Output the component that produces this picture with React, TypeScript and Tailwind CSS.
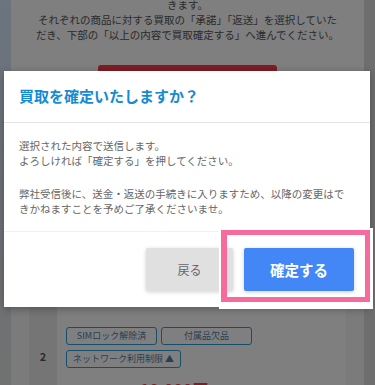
import React from "react";

const Tag = ({ label, fixed = true }: { label: string; fixed?: boolean }) => (
  <div
    className={`h-[18px] flex items-center justify-center rounded-[3px] border border-[#2a9fd6] text-[9px] text-[#4f7ea8] ${
      fixed ? "w-[91px]" : "px-[6px]"
    }`}
  >
    {label}
  </div>
);

export default function App() {
  return (
    <div className="relative w-[375px] h-[385px] overflow-hidden font-['Noto_Sans_CJK_JP','Noto_Sans',sans-serif]">
      {/* page behind the dialog */}
      <div className="flex h-full">
        <div className="w-[11px] bg-gradient-to-b from-[#d6e8fe] to-[#e2e2e2]" />
        <div className="flex-1 bg-white flex flex-col">
          <p className="shrink-0 -mt-[3px] text-center text-[10.5px] leading-[15px] text-[#555]">
            きます。
            <br />
            それぞれの商品に対する買取の「承諾」「返送」を選択していた
            <br />
            だき、下部の「以上の内容で買取確定する」へ進んでください。
          </p>
          <div className="shrink-0 mt-[23px] ml-[87px] w-[179px] h-[40px] rounded-t-[3px] bg-[#fe3848]" />

          <div className="shrink-0 mt-[195px] bg-[#f6f6f6] px-[18px]">
            <div className="flex h-[112px] bg-white">
              <div className="w-[28px] bg-[#ebebeb] flex items-center justify-center text-[11px] font-bold text-[#555]">
                2
              </div>
              <div className="flex-1 pl-[9px] pt-[27px]">
                <div className="flex gap-[4px]">
                  <Tag label="SIMロック解除済" />
                  <Tag label="付属品欠品" />
                </div>
                <div className="flex mt-[5px]">
                  <Tag label="ネットワーク利用制限 ▲" fixed={false} />
                </div>
                <div className="mt-[10px] ml-[74px] text-[16px] leading-[22px] font-bold text-[#fe3848]">
                  10,000円
                </div>
              </div>
            </div>
          </div>
        </div>
        <div className="w-[11px] bg-[#dcdcdc]" />
      </div>

      {/* dim overlay */}
      <div className="absolute inset-0 bg-black/50" />

      {/* dialog */}
      <div className="absolute left-[4px] top-[71px] w-[366px] bg-white shadow-[0_2px_8px_rgba(0,0,0,0.3)]">
        <div className="px-[15px] pt-[14px] pb-[16px] border-b border-[#e4e4ec] text-[15px] leading-[21px] font-bold text-[#168bd2]">
          買取を確定いたしますか？
        </div>
        <div className="px-[15px] pt-[16px] pb-[15px] text-[10.5px] leading-[14.5px] text-[#666]">
          <p>
            選択された内容で送信します。
            <br />
            よろしければ「確定する」を押してください。
          </p>
          <p className="mt-[19px]">
            弊社受信後に、送金・返送の手続きに入りますため、以降の変更はで
            <br />
            きかねますことを予めご了承くださいませ。
          </p>
        </div>
        <div className="flex justify-end gap-[11px] border-t border-[#f2f2f2] pt-[16px] pb-[16px] pr-[16px]">
          <button className="w-[87px] h-[43px] rounded-[2px] bg-[#e0e0e0] text-[12px] text-[#666] shadow-[0_1px_4px_rgba(0,0,0,0.18)]">
            戻る
          </button>
          <button className="w-[110px] h-[43px] rounded-[2px] bg-[#4287f5] text-[14.5px] font-bold text-white shadow-[0_1px_4px_rgba(0,0,0,0.2)]">
            確定する
          </button>
        </div>
      </div>

      {/* highlight frame */}
      <div className="absolute left-[219px] top-[228px] w-[154px] h-[81px] border-white border-t-2 border-l-2 border-r-[3px] border-b-[7px]">
        <div className="w-full h-full border-[5px] border-l-[6px] border-[#f66b9b]" />
      </div>
    </div>
  );
}
